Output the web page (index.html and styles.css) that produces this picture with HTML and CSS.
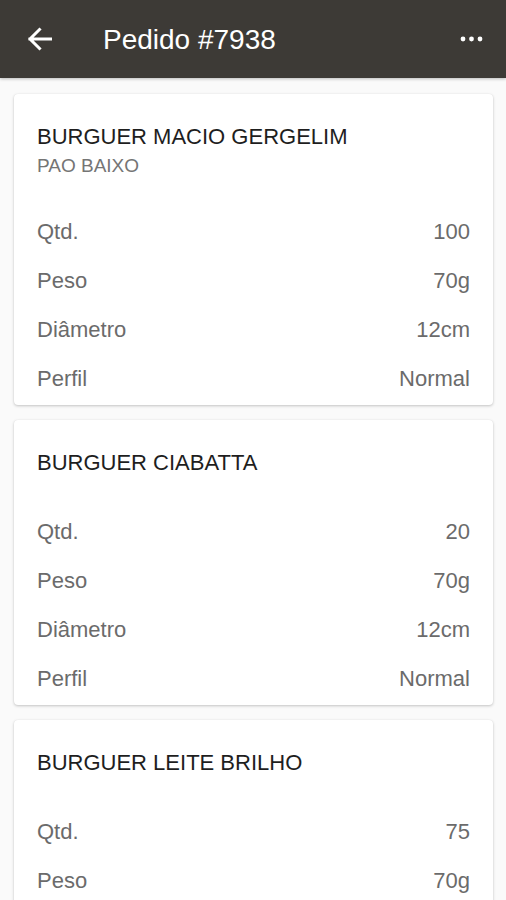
FILE: index.html
```html
<!DOCTYPE html>
<html>
<head>
    <meta charset="UTF-8">
    <title>Pedido #7938</title>
    <link rel="stylesheet" href="styles.css">
</head>
<body>
    <div class="app-bar">
        <svg class="back-icon" width="25" height="24" viewBox="0 0 25 24">
            <path d="M24 12H3M12.5 2.5L3 12l9.5 9.5" fill="none" stroke="#fff" stroke-width="3" stroke-linecap="square"/>
        </svg>
        <span class="app-title">Pedido #7938</span>
        <svg class="more-icon" width="26" height="8" viewBox="0 0 26 8">
            <circle cx="4" cy="4" r="2.4" fill="#fff"/>
            <circle cx="12.5" cy="4" r="2.4" fill="#fff"/>
            <circle cx="21" cy="4" r="2.4" fill="#fff"/>
        </svg>
    </div>

    <div class="order-list">
        <div class="item-card">
            <div class="item-name">BURGUER MACIO GERGELIM</div>
            <div class="item-sub">PAO BAIXO</div>
            <div class="item-rows">
                <div class="item-row"><span>Qtd.</span><span>100</span></div>
                <div class="item-row"><span>Peso</span><span>70g</span></div>
                <div class="item-row"><span>Diâmetro</span><span>12cm</span></div>
                <div class="item-row"><span>Perfil</span><span>Normal</span></div>
            </div>
        </div>

        <div class="item-card">
            <div class="item-name">BURGUER CIABATTA</div>
            <div class="item-rows">
                <div class="item-row"><span>Qtd.</span><span>20</span></div>
                <div class="item-row"><span>Peso</span><span>70g</span></div>
                <div class="item-row"><span>Diâmetro</span><span>12cm</span></div>
                <div class="item-row"><span>Perfil</span><span>Normal</span></div>
            </div>
        </div>

        <!-- only the rows that fit in the window -->
        <div class="item-card">
            <div class="item-name">BURGUER LEITE BRILHO</div>
            <div class="item-rows">
                <div class="item-row"><span>Qtd.</span><span>75</span></div>
                <div class="item-row"><span>Peso</span><span>70g</span></div>
            </div>
        </div>
    </div>
</body>
</html>
```

FILE: styles.css
```css
body {
    font-family: "Liberation Sans", Arial, sans-serif;
    margin: 0;
    background-color: #fafafa;
    color: #222;
    height: 900px;
    overflow: hidden;
}
.app-bar {
    height: 78px;
    background-color: #3d3a36;
    display: flex;
    align-items: center;
    padding: 0 21px 0 27px;
    box-shadow: 0 1px 3px rgba(0,0,0,0.25);
    position: relative;
}
.back-icon {
    flex: none;
}
.app-title {
    color: #fff;
    font-size: 28px;
    margin-left: 51px;
    margin-top: 2px;
    flex: 1;
    line-height: 1;
}
.more-icon {
    flex: none;
}
.order-list {
    padding: 16px 13px 0 14px;
}
.item-card {
    background-color: #fff;
    border-radius: 4px;
    box-shadow: 0 1px 3px rgba(0,0,0,0.22), 0 0 1px rgba(0,0,0,0.08);
    padding: 30px 23px 2px 23px;
    margin-bottom: 15px;
}
.item-name {
    font-size: 22px;
    line-height: 26px;
    color: #1e1e1e;
}
.item-sub {
    font-size: 19px;
    line-height: 22px;
    margin-top: 5px;
    color: #757575;
}
.item-rows {
    margin-top: 31px;
}
.item-sub + .item-rows {
    margin-top: 30px;
}
.item-row {
    display: flex;
    justify-content: space-between;
    font-size: 22px;
    line-height: 49px;
    color: #6b6b6b;
}
```
